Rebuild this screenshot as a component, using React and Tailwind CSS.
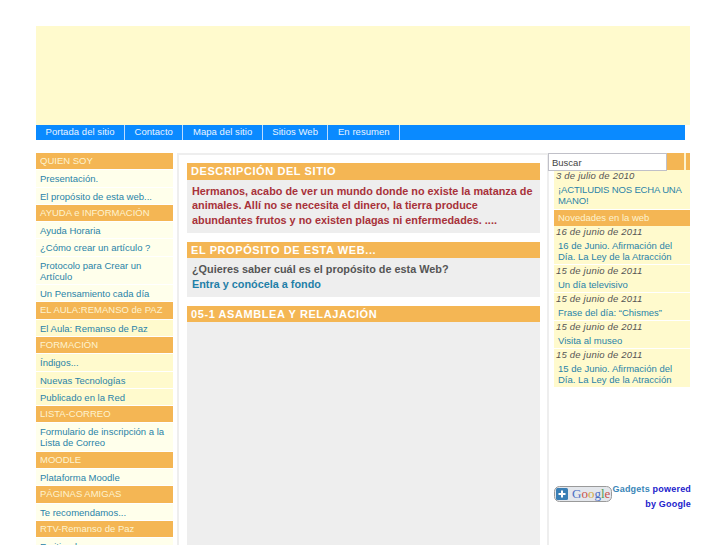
const font = { fontFamily: '"Liberation Sans", Arial, sans-serif' };

const menu = [
  { title: 'QUIEN SOY', items: [['Presentación.'], ['El propósito de esta web...']] },
  {
    title: 'AYUDA e INFORMACIÓN',
    items: [['Ayuda Horaria'], ['¿Cómo crear un artículo ?'], ['Protocolo para Crear un', 'Artículo'], ['Un Pensamiento cada día']],
  },
  { title: 'EL AULA:REMANSO de PAZ', items: [['El Aula: Remanso de Paz']], dark: true },
  { title: 'FORMACIÓN', items: [['Índigos...'], ['Nuevas Tecnologías'], ['Publicado en la Red']], dark: true },
  { title: 'LISTA-CORREO', items: [['Formulario de inscripción a la', 'Lista de Correo']] },
  { title: 'MOODLE', items: [['Plataforma Moodle']] },
  { title: 'PÁGINAS AMIGAS', items: [['Te recomendamos...']] },
  { title: 'RTV-Remanso de Paz', items: [['Emitiendo']] },
];

const news = [
  ['16 de junio de 2011', '16 de Junio. Afirmación del', 'Día. La Ley de la Atracción'],
  ['15 de junio de 2011', 'Un día televisivo'],
  ['15 de junio de 2011', 'Frase del día: “Chismes”'],
  ['15 de junio de 2011', 'Visita al museo'],
  ['15 de junio de 2011', '15 de Junio. Afirmación del', 'Día. La Ley de la Atracción'],
];

function SideGroup({ group }) {
  return (
    <div>
      <div className="h-[16.3px] mb-px px-1 bg-[#f4b654] text-[#fdf3d0] text-[9.5px] leading-[16px] whitespace-nowrap">
        {group.title}
      </div>
      {group.items.map(lines => (
        <div
          key={lines[0]}
          className={`${group.dark ? 'bg-[#fffacd]' : 'bg-[#ffffeb]'} mb-px px-1 pt-[3px] pb-[2.3px] text-[#2a83a8] text-[9.5px] leading-[11px] whitespace-nowrap`}
        >
          {lines.map(line => (
            <div key={line}>{line}</div>
          ))}
        </div>
      ))}
    </div>
  );
}

function Section({ title, children, grow }) {
  return (
    <div className={grow ? 'flex-1 flex flex-col' : ''}>
      <div className="h-[16.5px] px-1 bg-[#f4b654] text-white text-[11px] leading-[16px] font-bold tracking-[0.58px] whitespace-nowrap">
        {title}
      </div>
      <div className={`${grow ? 'flex-1' : ''} bg-[#eeeeee] px-[5px] pt-[4px] pb-[5px] text-[10.85px] leading-[14.7px] font-bold whitespace-nowrap`}>
        {children}
      </div>
    </div>
  );
}

function GoogleButton() {
  return (
    <svg width="58" height="16" viewBox="0 0 58 16" className="shrink-0">
      <rect x="0.5" y="0.5" width="57" height="15" rx="5" fill="#e4e7ec" stroke="#9a9a9a" />
      <rect x="2" y="2" width="12" height="12" rx="1.5" fill="#3a7fb5" />
      <path d="M8 4.5v7M4.5 8h7" stroke="#fff" strokeWidth="2" />
      <text x="18" y="12" fontSize="13" fontFamily="Liberation Serif, serif">
        <tspan fill="#4a6fc4">G</tspan>
        <tspan fill="#c9504a">o</tspan>
        <tspan fill="#d2a93a">o</tspan>
        <tspan fill="#4a6fc4">g</tspan>
        <tspan fill="#4f9a54">l</tspan>
        <tspan fill="#c9504a">e</tspan>
      </text>
    </svg>
  );
}

export default function App() {
  return (
    <div className="w-[727px] h-[545px] overflow-hidden bg-white pt-[26px] pl-[36px]" style={font}>
      <div className="w-[654px] h-[99px] bg-[#fffacd]" />
      <div className="w-[649px] h-[15px] bg-[#0a8aff] flex text-[#e8f3ff] text-[9.5px] leading-[14px] tracking-[0.05px]">
        {['Portada del sitio', 'Contacto', 'Mapa del sitio', 'Sitios Web', 'En resumen'].map(label => (
          <div key={label} className="px-[9.5px] border-r border-[#bcdcff] whitespace-nowrap">
            {label}
          </div>
        ))}
      </div>

      <div className="flex mt-[13px] w-[654px]">
        <div className="w-[137px] shrink-0">
          {menu.map(group => (
            <SideGroup key={group.title} group={group} />
          ))}
        </div>

        <div className="w-[372px] h-[392px] ml-1 shrink-0 border-t-2 border-l-2 border-r-2 border-[#eeeeee] pt-[8px] pl-2 pr-[7px] flex flex-col gap-[9px]">
          <Section title="DESCRIPCIÓN DEL SITIO">
            <div className="text-[#a8323a]">
              <div>Hermanos, acabo de ver un mundo donde no existe la matanza de</div>
              <div>animales. Allí no se necesita el dinero, la tierra produce</div>
              <div>abundantes frutos y no existen plagas ni enfermedades. ....</div>
            </div>
          </Section>
          <Section title="EL PROPÓSITO DE ESTA WEB...">
            <div className="text-[#555555]">¿Quieres saber cuál es el propósito de esta Web?</div>
            <div className="text-[#1f7fa8]">Entra y conócela a fondo</div>
          </Section>
          <Section title="05-1 ASAMBLEA Y RELAJACIÓN" grow />
        </div>

        <div className="flex-1 min-w-0 pl-[5px]">
          <div className="relative h-[17px] bg-[#f4b654] flex justify-end">
            <div className="w-[2px] mr-[4px] bg-[#fdf3d0]" />
            <input
              readOnly
              value="Buscar"
              className="absolute left-[-6px] top-0 w-[119px] h-[18px] bg-white border border-[#c0c0c8] px-[3px] text-[#444444] text-[9.5px] outline-none"
            />
          </div>
          <div className="bg-[#fffacd] pb-[3px] whitespace-nowrap">
            <div className="text-[#555555] text-[9.5px] italic leading-[11px] tracking-[0.2px] pl-[2px]">3 de julio de 2010</div>
            <div className="text-[#2a83a8] text-[9.5px] leading-[10.5px] tracking-[-0.15px] pl-1 pt-[4px]">
              <div>¡ACTILUDIS NOS ECHA UNA</div>
              <div>MANO!</div>
            </div>
          </div>
          <div className="h-[16px] mt-px px-1 bg-[#f4b654] text-[#fdf3d0] text-[9.5px] leading-[16px]">
            Novedades en la web
          </div>
          {news.map(([date, ...lines]) => (
            <div key={date + lines[0]} className="bg-[#fffacd] mb-px pb-[2px] whitespace-nowrap">
              <div className="text-[#555555] text-[9.5px] italic leading-[11px] tracking-[0.2px] pl-[2px]">{date}</div>
              <div className="text-[#2a83a8] text-[9.5px] leading-[11px] pl-1 pt-[3px]">
                {lines.map(line => (
                  <div key={line}>{line}</div>
                ))}
              </div>
            </div>
          ))}
          <div className="flex mt-[95px] gap-[0.5px]">
            <div className="pt-[4px]">
              <GoogleButton />
            </div>
            <div className="flex-1 text-right font-bold text-[9px] leading-[15px] tracking-[0.2px] text-[#2222cc] whitespace-nowrap">
              <div>
                <span className="text-[#3a86b8]">Gadgets</span> powered
              </div>
              <div>by Google</div>
            </div>
          </div>
        </div>
      </div>
    </div>
  );
}
